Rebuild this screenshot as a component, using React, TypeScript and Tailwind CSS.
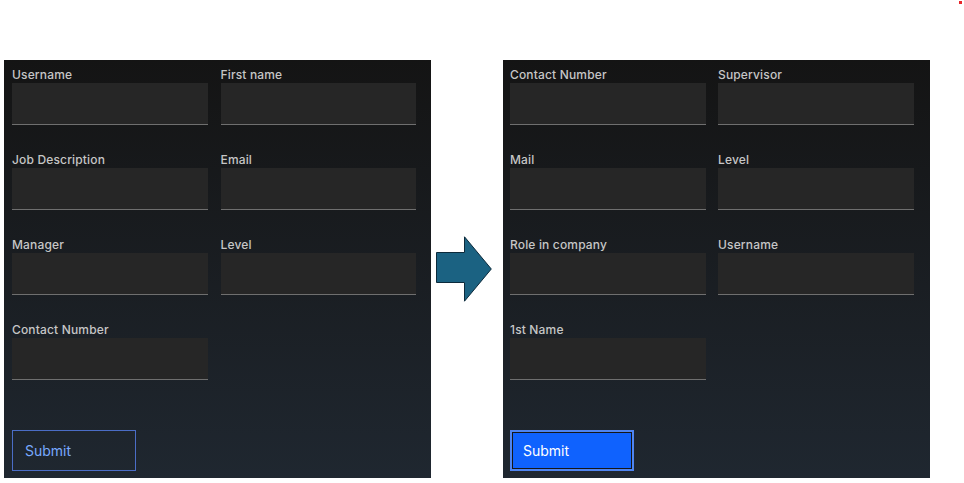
const before: [string, string][] = [
  ["Username", "First name"],
  ["Job Description", "Email"],
  ["Manager", "Level"],
  ["Contact Number", ""],
];

const after: [string, string][] = [
  ["Contact Number", "Supervisor"],
  ["Mail", "Level"],
  ["Role in company", "Username"],
  ["1st Name", ""],
];

function Field({ label }: { label: string }) {
  if (!label) return <div />;
  return (
    <div className="flex flex-col">
      <label className="text-[12px] leading-[17px] font-medium tracking-[0.16px] text-[#c6c6c6]">{label}</label>
      <input
        type="text"
        className="h-[42px] w-full bg-[#262626] border-b border-[#6f6f6f] outline-none"
      />
    </div>
  );
}

function FormPanel({ rows, primary }: { rows: [string, string][]; primary?: boolean }) {
  return (
    <div
      className={
        primary
          ? "w-[427px] h-[418px] flex flex-col pt-[6px] pl-[7px] pr-[16px] bg-gradient-to-b from-[#141414] to-[#1f2730]"
          : "w-[427px] h-[418px] flex flex-col pt-[6px] pl-[8px] pr-[15px] bg-gradient-to-b from-[#141414] to-[#1f2730]"
      }
    >
      <div className={primary ? "grid grid-cols-2 gap-x-[12px] gap-y-[26px]" : "grid grid-cols-2 gap-x-[13px] gap-y-[26px]"}>
        {rows.map(([a, b], i) => (
          <div key={i} className="contents">
            <Field label={a} />
            <Field label={b} />
          </div>
        ))}
      </div>
      {primary ? (
        <button className="mt-[50px] w-[124px] h-[41px] text-left pl-[11px] text-[14px] text-white bg-[#0f62fe] border-2 border-[#4f84f0] shadow-[inset_0_0_0_1px_#161616]">
          Submit
        </button>
      ) : (
        <button className="mt-[50px] w-[124px] h-[41px] text-left pl-[12px] text-[14px] text-[#78a9ff] border border-[#4b6dc6]">
          Submit
        </button>
      )}
    </div>
  );
}

export default function App() {
  return (
    <div className="relative w-[964px] h-[483px] bg-white font-['Inter',sans-serif]">
      <span className="absolute left-[959px] top-[1px] w-[3px] h-[3px] bg-[#e8262a]" />
      <div className="flex items-center pt-[60px] pl-[4px]">
        <FormPanel rows={before} />
        <svg width="56" height="66" viewBox="0 0 56 66" className="ml-[5px] mr-[11px]">
          <path
            d="M0.5 16.5 H28.5 V0.8 L55.3 33 L28.5 65.2 V46.5 H0.5 Z"
            fill="#1b6282"
            stroke="#0c2a3b"
            strokeWidth="1"
          />
        </svg>
        <FormPanel rows={after} primary />
      </div>
    </div>
  );
}
